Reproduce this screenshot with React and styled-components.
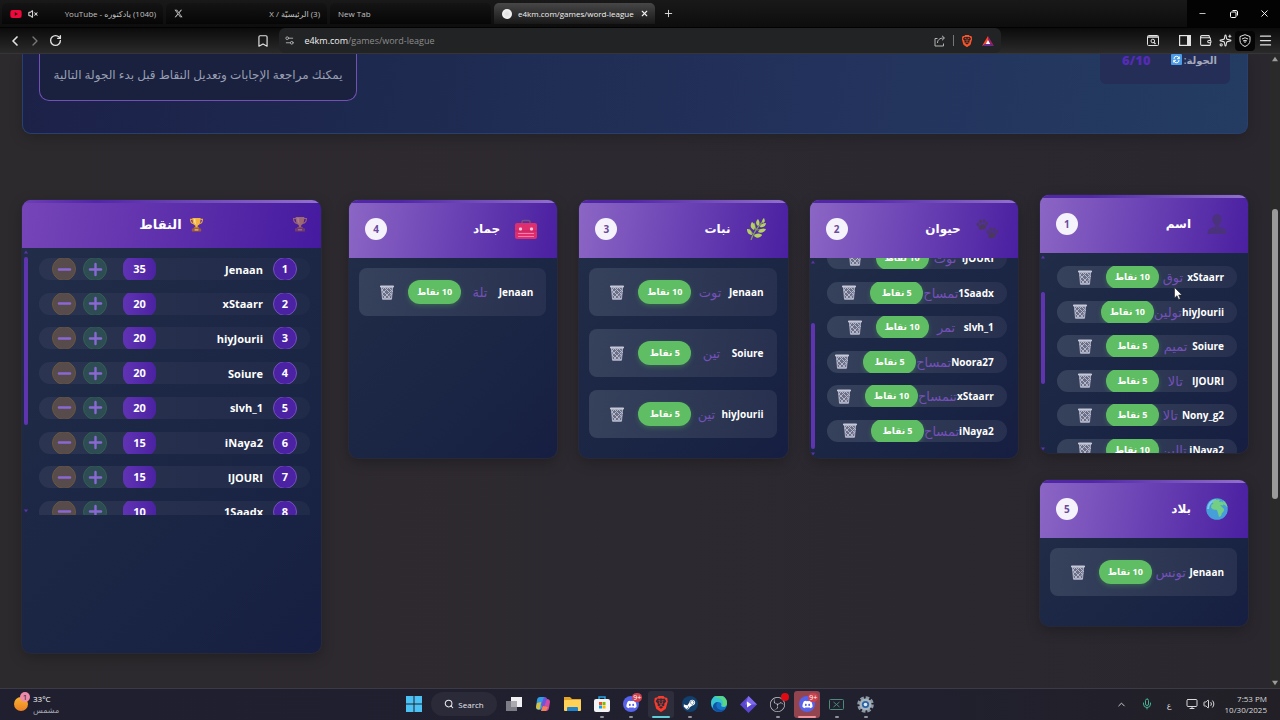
import React from "react";
import styled, { createGlobalStyle } from "styled-components";
import {
  Bookmark,
  ChevronLeft,
  ChevronRight,
  ChevronUp,
  Menu,
  Mic,
  Minus,
  Monitor,
  Plus,
  RotateCw,
  Search,
  Settings2,
  Sparkles,
  Volume2,
  VolumeX,
  Wallet,
  X,
} from "lucide-react";
import { FaDiscord, FaSteamSymbol, FaXTwitter, FaYoutube } from "react-icons/fa6";
import { SiBrave, SiObsstudio } from "react-icons/si";

const categories = [
  {
    id: 1,
    title: "اسم",
    icon: "person",
    lifted: true,
    scroll: [34, 93, 64],
    rows: [
      ["xStaarr", "توق", 10],
      ["hiyJourii", "تولين", 10],
      ["Soiure", "تميم", 5],
      ["IJOURI", "تالا", 5],
      ["Nony_g2", "تالا", 5],
      ["iNaya2", "تالين", 10],
    ],
  },
  {
    id: 2,
    title: "حيوان",
    icon: "paws",
    atEnd: true,
    scroll: [60, 127, 3],
    rows: [
      ["IJOURI", "توت", 10],
      ["1Saadx", "تمساح", 5],
      ["slvh_1", "تمر", 10],
      ["Noora27", "تمساح", 5],
      ["xStaarr", "تنمساح", 10],
      ["iNaya2", "تمساح", 5],
    ],
  },
  {
    id: 3,
    title: "نبات",
    icon: "herb",
    rows: [
      ["Jenaan", "توت", 10],
      ["Soiure", "تين", 5],
      ["hiyJourii", "تين", 5],
    ],
  },
  { id: 4, title: "جماد", icon: "toolbox", rows: [["Jenaan", "تلة", 10]] },
  { id: 5, title: "بلاد", icon: "globe", rows: [["Jenaan", "تونس", 10]] },
];

const players = [
  ["Jenaan", 35],
  ["xStaarr", 20],
  ["hiyJourii", 20],
  ["Soiure", 20],
  ["slvh_1", 20],
  ["iNaya2", 15],
  ["IJOURI", 15],
  ["1Saadx", 10],
];

const Trophy = ({ size = 16 }) => (
  <svg width={size} height={size} viewBox="0 0 16 16" aria-hidden="true">
    <path d="M4 2.500H1.600c0 3 1.200 4.600 3.600 4.800M12 2.500h2.400c0 3-1.200 4.600-3.600 4.800" fill="none" stroke="#e8a33d" strokeWidth="1.200" />
    <path d="M3.600 1h8.800c0 4.600-1 7.200-3.200 8.200v2.300H6.800V9.200C4.600 8.200 3.600 5.600 3.600 1z" fill="#f2b544" />
    <path d="M5.200 2h1.600c0 2.600.3 4.400 1 6-1.800-.8-2.600-3-2.600-6z" fill="#ffe09a" />
    <path d="M5.500 11h5l.7 1.500H4.800z" fill="#c9782c" />
    <rect x="3" y="12.300" width="10" height="3.200" rx=".5" fill="#9b5b3a" />
    <rect x="6" y="13" width="4" height="1.500" fill="#e9b565" />
  </svg>
);

const Trash = () => (
  <svg width="14" height="15" viewBox="0 0 14 15" aria-hidden="true">
    <path d="M1.500 2l1 12.200h9L12.500 2z" fill="#6b6f88" stroke="#b4b7ca" />
    <path d="M2 5l9 9M2 9l5 5M4 2l8 8M8 2l5 5M12 5l-9 9M12 8.500L7 14M9 2L2 9M5 2L1.500 5.500M2.500 13.700h9" stroke="#b4b7ca" />
    <rect x="0" y=".5" width="14" height="2" rx=".8" fill="#c5c8d8" />
  </svg>
);

const CategoryIcon = ({ name }) => (
  <svg width="22" height="22" viewBox="0 0 22 22" aria-hidden="true">
    {name === "person" && (
      <g fill="#4b327d">
        <ellipse cx="11" cy="6.500" rx="4.600" ry="5.500" />
        <path d="M9 10h4v4c3 .8 6 1.500 7 3.500l.5 3.500h-19l.5-3.500c1-2 4-2.700 7-3.500z" />
      </g>
    )}
    {name === "paws" && (
      <g fill="#4a3a59">
        <path d="M3 9c1-2 3-3.500 5-2.500s2.600 2.500 1.500 4-2.500.4-3.800 1S2 11 3 9z" />
        <ellipse cx="2" cy="6.500" rx="1.200" ry="1.900" transform="rotate(-20 2 6.500)" />
        <ellipse cx="4.500" cy="3.500" rx="1.200" ry="2" />
        <ellipse cx="8" cy="3" rx="1.200" ry="2" />
        <ellipse cx="10.500" cy="5.500" rx="1.100" ry="1.800" transform="rotate(25 10.500 5.500)" />
        <path d="M12.500 18c.5-2.500 2-4 4-3.500s3.500 1.500 3 3.500-2 1.300-3.200 2-4.300.5-3.800-2z" />
        <ellipse cx="12" cy="14" rx="1.200" ry="1.900" transform="rotate(-20 12 14)" />
        <ellipse cx="14.500" cy="11.500" rx="1.200" ry="1.900" />
        <ellipse cx="18" cy="11.500" rx="1.200" ry="1.900" />
        <ellipse cx="20.500" cy="14" rx="1.100" ry="1.800" transform="rotate(25 20.500 14)" />
      </g>
    )}
    {name === "herb" && (
      <g fill="#b5cf62">
        <path d="M5 22C7 15 11 10 17 3M7 16L3 11M10 12L8 5M8 17l8 0M11 12l7-1" fill="none" stroke="#7f9d58" strokeWidth="1.200" />
        <path d="M17 5c-2-2 0-4 1-5 1 2 1.500 4-1 5zM12 8C9 6 10 3 12 1c2 3 2 5 0 7z" />
        <path d="M8 12C4 10 4 7 6 4c3 2 4 5 2 8zM6 17c-4-.5-5-3-5-6 3 0 5 2.500 5 6z" />
        <path d="M14 9c0-3 3-4 6-4 0 3-3 5-6 4zM12 14c1-3 4-4 8-3-1 3-5 5-8 3zM8 18c2-3 5-3 8-1-2 3-5 4-8 1z" />
      </g>
    )}
    {name === "toolbox" && (
      <g>
        <path d="M7 6V4q0-1.500 1.500-1.500h5Q15 2.500 15 4v2" fill="none" stroke="#76527f" strokeWidth="1.500" />
        <rect x="0" y="5" width="22" height="16" rx="2" fill="#dd2e6e" />
        <path d="M0 13h22" stroke="#c92262" />
        <rect x="4" y="9.500" width="3" height="3" rx="1" fill="#ffc7dc" />
        <rect x="15" y="9.500" width="3" height="3" rx="1" fill="#ffc7dc" />
        <path d="M3 15.500h16M3 18.500h16" stroke="#ff7aa8" strokeWidth="1.200" />
      </g>
    )}
    {name === "globe" && (
      <g>
        <circle cx="11" cy="11" r="10.800" fill="#469fd9" />
        <path d="M2 11a9 9 0 0 1 8-9" stroke="#7cc6ef" strokeWidth="2" fill="none" />
        <path d="M6 4c2-2 5-3 8-2l-1 2 3-.5 2 2-1 2-3-.5 2 2 2 2c0 3-1 3-2 4l-1 3-2 1-1-4-1-3-4-.5-2-2 .5-3 2-.5z" fill="#72cf83" />
        <path d="M17 2.500c3 2 4 4 4.500 7l-2-2-2-1z" fill="#72cf83" />
      </g>
    )}
  </svg>
);

const ScrollThumb = ({ parts: [before, size, after] }) => (
  <ListScroll aria-hidden="true">
    <Arrow viewBox="0 0 4 3"><path d="M0 3l2-3 2 3z" fill="currentColor" /></Arrow>
    <Space $grow={before} />
    <Thumb $grow={size} />
    <Space $grow={after} />
    <Arrow viewBox="0 0 4 3"><path d="M0 0l2 3 2-3z" fill="currentColor" /></Arrow>
  </ListScroll>
);

const Category = ({ data }) => {
  const { title, icon, id, rows, scroll, atEnd, lifted } = data;
  return (
    <Card $lifted={lifted} $tall={id < 5}>
      <CardHeader>
        <CategoryIcon name={icon} />
        <h2>{title}</h2>
        <Badge>{id}</Badge>
      </CardHeader>
      <ListArea>
        <Answers $compact={!!scroll} $atEnd={atEnd}>
          {rows.map(([name, answer, points]) => (
            <Answer key={name} $compact={!!scroll}>
              <strong>{name}</strong>
              <Word>{answer}</Word>
              <Points>{points} نقاط</Points>
              <TrashButton type="button" aria-label={`حذف ${name}`}>
                <Trash />
              </TrashButton>
            </Answer>
          ))}
        </Answers>
        {scroll && <ScrollThumb parts={scroll} />}
      </ListArea>
    </Card>
  );
};

const ScoreBoard = () => (
  <Scores>
    <ScoreHeader>
      <FadedTrophy><Trophy /></FadedTrophy>
      <h2><Trophy size={15} /> النقاط</h2>
    </ScoreHeader>
    <ScoreArea>
      <Ranking>
        {players.map(([name, score], i) => (
          <Player key={name}>
            <Rank>{i + 1}</Rank>
            <strong>{name}</strong>
            <Score>{score}</Score>
            <RoundButton $plus type="button" aria-label={`زيادة ${name}`}><Plus size={19} strokeWidth={3} /></RoundButton>
            <RoundButton type="button" aria-label={`إنقاص ${name}`}><Minus size={19} strokeWidth={3} /></RoundButton>
          </Player>
        ))}
      </Ranking>
      <ScrollThumb parts={[3, 169, 84]} />
    </ScoreArea>
  </Scores>
);

const BrowserTop = () => (
  <>
    <TabBar>
      <Tab>
        <FaYoutube color="#f0083c" size={12} />
        <VolumeX size={10} strokeWidth={2.5} color="#e0e0e0" />
        <TabTitle dir="rtl">(1040) يادكتوره - YouTube</TabTitle>
      </Tab>
      <Tab>
        <FaXTwitter color="#c9c9c9" size={9} />
        <TabTitle dir="rtl">(3) الرئيسيّة / X</TabTitle>
      </Tab>
      <Tab><span>New Tab</span></Tab>
      <Tab $active>
        <Favicon />
        <span>e4km.com/games/word-league</span>
        <CloseTab type="button" aria-label="Close tab"><X size={9} strokeWidth={3} /></CloseTab>
      </Tab>
      <BarButton type="button" aria-label="New tab"><Plus size={11} /></BarButton>
      <WindowButtons>
        <button type="button" aria-label="Minimize"><Minus size={9} /></button>
        <button type="button" aria-label="Restore">
          <svg width="8" height="8" viewBox="0 0 8 8" fill="none" stroke="currentColor">
            <rect x=".5" y="2" width="5.500" height="5.500" rx="1" />
            <path d="M2.500.5H6Q7.500.5 7.500 2v3.500" />
          </svg>
        </button>
        <button type="button" aria-label="Close"><X size={11} /></button>
      </WindowButtons>
    </TabBar>
    <Toolbar>
      <Nav>
        <BarButton type="button" aria-label="Back"><ChevronLeft size={16} strokeWidth={2.5} /></BarButton>
        <BarButton $dim type="button" aria-label="Forward"><ChevronRight size={16} /></BarButton>
        <BarButton type="button" aria-label="Reload"><RotateCw size={13} strokeWidth={2.5} /></BarButton>
      </Nav>
      <BarButton type="button" aria-label="Bookmark"><Bookmark size={14} /></BarButton>
      <Address>
        <Settings2 size={11} />
        <p><b>e4km.com</b>/games/word-league</p>
        <svg width="12" height="12" viewBox="0 0 12 12" fill="none" stroke="currentColor" aria-hidden="true">
          <path d="M3.500 3.500H1v7.500h8.500V8.500M3.500 8c0-3 2-5 6.500-5M8 .8L10.500 3 8 5.300" />
        </svg>
        <i />
        <SiBrave size={12} color="#fb542b" />
        <svg width="12" height="10" viewBox="0 0 12 10" aria-hidden="true">
          <path d="M6 0L0 10l6-3.500z" fill="#ff4724" />
          <path d="M6 0l6 10-6-3.500z" fill="#9e1f63" />
          <path d="M0 10h12L6 6.500z" fill="#662d91" />
          <path d="M6 4l2.200 4H3.800z" fill="#fff" />
        </svg>
      </Address>
      <Tools>
        <BarButton type="button" aria-label="Find">
          <svg width="12" height="11" viewBox="0 0 12 11" fill="none" stroke="currentColor">
            <rect x=".5" y=".5" width="11" height="10" rx="1" />
            <path d="M1 2h10M7 7.500l1.500 1.500" strokeWidth="1.400" />
            <circle cx="5.800" cy="6" r="1.800" />
          </svg>
        </BarButton>
        <BarButton $spaced type="button" aria-label="Side panel">
          <svg width="12" height="11" viewBox="0 0 12 11">
            <rect x=".6" y=".6" width="10.800" height="9.800" fill="none" stroke="currentColor" strokeWidth="1.200" />
            <path d="M8 0h4v11H8z" fill="currentColor" />
          </svg>
        </BarButton>
        <BarButton type="button" aria-label="Wallet"><Wallet size={13} /></BarButton>
        <BarButton type="button" aria-label="Leo"><Sparkles size={13} /></BarButton>
        <BarButton $dark type="button" aria-label="VPN">
          <svg width="12" height="13" viewBox="0 0 12 13" fill="none" stroke="currentColor">
            <path d="M6 .7l5 1.800v4c0 3-2 4.700-5 6-3-1.300-5-3-5-6v-4z" />
            <path d="M3 5q3-2.500 6 0M4 7q2-1.500 4 0M6 7v2" />
          </svg>
        </BarButton>
        <BarButton type="button" aria-label="Menu"><Menu size={15} /></BarButton>
      </Tools>
    </Toolbar>
  </>
);

const DiscordIcon = () => (
  <>
    <Disc $color="#5662ea"><FaDiscord size={11} color="#fff" /></Disc>
    <Notice>9+</Notice>
  </>
);

const Steam = () => (
  <Disc $color="#123f6b"><FaSteamSymbol size={13} color="#fff" /></Disc>
);

const Obs = () => (
  <>
    <SiObsstudio size={15} color="#c8c8cc" />
    <Notice $dot />
  </>
);

const apps = [
  {
    name: "Task view",
    icon: (
      <svg width="16" height="16" viewBox="0 0 16 16">
        <rect x="5" y="1" width="11" height="10" fill="#f1f1f3" />
        <rect x="0" y="5" width="11" height="10" fill="#7c7c86" />
        <path d="M5 5h6v6H5z" fill="#aaaab0" />
      </svg>
    ),
  },
  {
    name: "Copilot",
    icon: (
      <svg width="16" height="16" viewBox="0 0 16 16">
        <path d="M5 1h5L7 12q-.5 2-3 2-3 0-3-3l1-7q.5-3 3-3z" fill="#2f9ce8" />
        <path d="M2 7l4-1-1 7q-4 1-4-2z" fill="#d9c13e" />
        <path d="M11 15H6l3-10q.5-2 3-2 3 0 3 3l-1 6q-.5 3-3 3z" fill="#d04ba5" />
        <path d="M9 1q3 0 3 2L9 11 6 9z" fill="#6e54d8" />
        <path d="M6 15l2-5 5 1-2 4z" fill="#f28155" />
      </svg>
    ),
  },
  {
    name: "Explorer",
    icon: (
      <svg width="17" height="16" viewBox="0 0 17 16">
        <path d="M0 1h6l2 2h9v4H0z" fill="#e2a527" />
        <rect y="4" width="17" height="11" rx="1" fill="#ffd257" />
        <path d="M3 15v-3q0-1 1-1h9q1 0 1 1v3z" fill="#1e83cc" />
      </svg>
    ),
  },
  {
    name: "Store",
    running: true,
    icon: (
      <svg width="16" height="16" viewBox="0 0 16 16">
        <path d="M5 4V1h6v3" fill="none" stroke="#29a4e6" strokeWidth="1.500" />
        <rect y="3" width="16" height="13" rx="2" fill="#f4f4f6" />
        <path d="M5 6h3v3H5z" fill="#f25022" />
        <path d="M8.500 6h3v3h-3z" fill="#7fba00" />
        <path d="M5 9.500h3v3H5z" fill="#00a4ef" />
        <path d="M8.500 9.500h3v3h-3z" fill="#ffb900" />
      </svg>
    ),
  },
  { name: "Discord", running: true, icon: <DiscordIcon /> },
  { name: "Brave", active: "#60cdd8", bg: "#2d2d3c", icon: <SiBrave size={16} color="#fb3a2b" /> },
  { name: "Steam", running: true, icon: <Steam /> },
  {
    name: "Edge",
    icon: (
      <svg width="16" height="16" viewBox="0 0 16 16">
        <circle cx="8" cy="8" r="8" fill="#1674c8" />
        <path d="M0 7a8 8 0 0 1 16 0c.5 4-4 5-6 3 1-2 0-4-3-4S2 8 2 12Q0 10 0 7z" fill="#37c6d0" />
        <path d="M8 0c5 0 8 3 8 7 0 3-3 4-5 3 3-5-1-9-7-8Q6 0 8 0z" fill="#5bd77d" />
        <path d="M7 6C4 8 5 13 10 14q2 0 4-1-3 4-8 2.500Q0 12 3 8q2-2 4-2z" fill="#1250a0" />
      </svg>
    ),
  },
  {
    name: "Clip",
    icon: (
      <svg width="17" height="17" viewBox="0 0 17 17">
        <path d="M8.500 0l8.500 8.500-8.500 8.500L0 8.500z" fill="#5947cf" />
        <path d="M8.500 0L17 8.500H5z" fill="#7f6bec" />
        <path d="M7 5.500l4.500 3L7 11.500z" fill="#fff" />
      </svg>
    ),
  },
  { name: "OBS", running: true, icon: <Obs /> },
  { name: "Discord call", active: "#f0929b", bg: "#92454f", icon: <DiscordIcon /> },
  {
    name: "Xbox",
    running: true,
    icon: (
      <svg width="15" height="11" viewBox="0 0 15 11" fill="none" stroke="#4d8a78">
        <rect x=".5" y=".5" width="14" height="10" rx="1" />
        <path d="M4.500 3l6 5M10.500 3l-6 5" />
      </svg>
    ),
  },
  {
    name: "Settings",
    running: true,
    icon: (
      <svg width="17" height="17" viewBox="0 0 17 17">
        <circle cx="8.500" cy="8.500" r="6.800" fill="none" stroke="#8c98a3" strokeWidth="3" strokeDasharray="3.500 1.840" />
        <circle cx="8.500" cy="8.500" r="6" fill="#a8b3bd" />
        <circle cx="8.500" cy="8.500" r="3.600" fill="#2b65a8" />
        <circle cx="8.500" cy="8.500" r="1.800" fill="#dfe9f4" />
      </svg>
    ),
  },
];

const TaskBar = () => (
  <Tasks>
    <Weather>
      <Sun><span>1</span></Sun>
      <p>33°C<br /><span>مشمس</span></p>
    </Weather>
    <Center>
      <AppButton type="button" aria-label="Start">
        <svg width="16" height="16" viewBox="0 0 16 16">
          <path d="M0 0h7.500v7.500H0zM8.500 0H16v7.500H8.500zM0 8.500h7.500V16H0zM8.500 8.500H16V16H8.500z" fill="#4cc2f4" />
        </svg>
      </AppButton>
      <SearchButton type="button"><Search size={10} strokeWidth={2.5} /> Search</SearchButton>
      <Apps>
        {apps.map((app) => (
          <AppButton key={app.name} type="button" aria-label={app.name} $bg={app.bg} $running={app.running} $active={app.active}>
            {app.icon}
          </AppButton>
        ))}
      </Apps>
    </Center>
    <Tray>
      <ChevronUp size={11} />
      <Mic size={12} color="#41b294" />
      <span>ع</span>
      <TrayPair><Monitor size={12} /><Volume2 size={12} /></TrayPair>
      <p>7:53 PM<br />10/30/2025</p>
    </Tray>
  </Tasks>
);

export default function App() {
  return (
    <Screen>
      <GlobalStyle />
      <BrowserTop />
      <Viewport>
        <Page dir="rtl">
          <Hero>
            <Round>
              <span>الجولة:</span>
              <svg width="11" height="11" viewBox="0 0 11 11" aria-hidden="true">
                <rect width="11" height="11" rx="1" fill="#4a9be8" />
                <path d="M3 5a2.500 2.500 0 0 1 5-.5M8 6a2.500 2.500 0 0 1-5 .5M8.300 2.500v2.200H6M2.700 8.500V6.300H5" fill="none" stroke="#fff" />
              </svg>
              <b>6/10</b>
            </Round>
            <Info>يمكنك مراجعة الإجابات وتعديل النقاط قبل بدء الجولة التالية</Info>
          </Hero>
          <Board>
            <Cards>
              {categories.map((c) => <Category key={c.id} data={c} />)}
            </Cards>
            <ScoreBoard />
          </Board>
        </Page>
        <PageScroll aria-hidden="true">
          <Arrow $page viewBox="0 0 4 3"><path d="M0 3l2-3 2 3z" fill="currentColor" /></Arrow>
          <Space $grow={146} />
          <Thumb $page $grow={287} />
          <Space $grow={180} />
          <Arrow $page viewBox="0 0 4 3"><path d="M0 0l2 3 2-3z" fill="currentColor" /></Arrow>
        </PageScroll>
      </Viewport>
      <TaskBar />
      <Pointer width="9" height="13" viewBox="0 0 9 13" aria-hidden="true">
        <path d="M.5.5v10.500L3 8.700 4.600 12.500l1.700-.8L4.700 8H8z" fill="#fff" stroke="#222" strokeWidth=".6" />
      </Pointer>
    </Screen>
  );
}

const GlobalStyle = createGlobalStyle`
  * {
    box-sizing: border-box;
  }
  body {
    margin: 0;
    background: #2c292f;
    color: #fff;
    font-family: "Open Sans", "DejaVu Sans", sans-serif;
    font-size: 10px;
  }
  h2, p, ul, ol {
    margin: 0;
    padding: 0;
    list-style: none;
  }
  button {
    border: 0;
    padding: 0;
    background: none;
    color: inherit;
    font: inherit;
  }
  svg {
    display: block;
    flex-shrink: 0;
  }
`;

const Screen = styled.div`
  height: 100vh;
  display: flex;
  flex-direction: column;
  overflow: hidden;
`;

const TabBar = styled.div`
  height: 28px;
  flex-shrink: 0;
  display: flex;
  align-items: center;
  gap: 3px;
  padding-left: 2px;
  background: linear-gradient(#191919, #0d0d0d);
  border-bottom: 1px solid #020202;
`;

const Tab = styled.div`
  width: 161px;
  height: 21px;
  display: flex;
  align-items: center;
  gap: 6px;
  padding: 0 7px 0 8px;
  font-size: 8px;
  white-space: nowrap;
  border-radius: 5px 5px 0 0;
  color: ${({ $active }) => ($active ? "#f2f2f2" : "#c0c0c0")};
  background: ${({ $active }) =>
    $active ? "linear-gradient(#474747, #181818)" : "linear-gradient(#141414, #060606)"};
`;

const TabTitle = styled.span`
  flex: 1;
`;

const Favicon = styled.i`
  width: 10px;
  height: 10px;
  flex-shrink: 0;
  border-radius: 50%;
  background: radial-gradient(#ddd, #fff);
`;

const CloseTab = styled.button`
  margin-left: auto;
`;

const BarButton = styled.button`
  width: 20px;
  height: 20px;
  flex-shrink: 0;
  display: grid;
  place-items: center;
  border-radius: 4px;
  color: ${({ $dim }) => ($dim ? "#777" : "#e2e2e2")};
  background: ${({ $dark }) => ($dark ? "#050505" : "transparent")};
  margin-left: ${({ $spaced }) => ($spaced ? "12px" : "0")};
`;

const WindowButtons = styled.div`
  display: flex;
  height: 100%;
  margin-left: auto;
  background: #030303;
  button {
    width: 31px;
    display: grid;
    place-items: center;
  }
`;

const Toolbar = styled.div`
  height: 26px;
  flex-shrink: 0;
  display: flex;
  align-items: center;
  padding: 0 5px;
  background: linear-gradient(#0b0b0b, #2a2a2b);
  border-bottom: 1px solid #353538;
`;

const Nav = styled.div`
  flex: 251 0 0;
  display: flex;
`;

const Address = styled.div`
  flex: 717 0 0;
  height: 100%;
  display: flex;
  align-items: center;
  gap: 9px;
  margin-left: 6px;
  padding: 0 7px 0 5px;
  border-radius: 6px;
  background: #222325;
  color: #b4b4b4;
  font-size: 9px;
  p {
    flex: 1;
    color: #8c8c8c;
  }
  b {
    font-weight: 500;
    color: #f0f0f0;
  }
  i {
    height: 11px;
    border-left: 1px solid #777;
    margin: 0 -2px;
  }
`;

const Tools = styled.div`
  flex: 277 0 0;
  display: flex;
  justify-content: flex-end;
`;

const Viewport = styled.main`
  flex: 1;
  min-height: 0;
  display: flex;
`;

const Page = styled.div`
  flex: 1;
  min-width: 0;
  padding: 0 22px;
  overflow: hidden;
  background: linear-gradient(90deg, #2d2a2e, #2d2930 50%, #2a272e);
`;

const PageScroll = styled.div`
  width: 10px;
  display: flex;
  flex-direction: column;
  align-items: center;
  padding: 2px 0;
  background: #2a2a2b;
  color: #9c9c9c;
`;

const Hero = styled.header`
  height: 80px;
  display: flex;
  justify-content: space-between;
  align-items: flex-start;
  padding: 0 17px 0 16px;
  border: solid #28406e;
  border-width: 0 1px 1px;
  border-radius: 0 0 9px 9px;
  background: linear-gradient(100deg, #1c2148, #1e2a50 32%, #23325c 65%, #243c62);
  box-shadow: 0 4px 14px #0003;
`;

const Round = styled.div`
  width: 130px;
  height: 30px;
  display: flex;
  gap: 2px;
  padding: 0 13px;
  font-weight: 600;
  line-height: 13px;
  color: #a4a9ba;
  border-radius: 0 0 6px 6px;
  background: #242e57;
  b {
    margin-inline-start: auto;
    margin-inline-end: 9px;
    font-size: 13px;
    color: #552bb5;
  }
`;

const Info = styled.p`
  width: 318px;
  height: 47px;
  padding-top: 12px;
  text-align: center;
  white-space: nowrap;
  font-size: 12px;
  line-height: 18px;
  color: #989eb0;
  border: solid #7350b5;
  border-width: 0 1px 1px;
  border-radius: 0 0 10px 10px;
  background: #1a213f;
`;

const Board = styled.div`
  display: grid;
  grid-template-columns: minmax(0, 1fr) 299px;
  align-items: start;
  gap: 28px;
  margin-top: 66px;
`;

const Cards = styled.div`
  display: grid;
  grid-template-columns: repeat(4, minmax(0, 1fr));
  align-items: start;
  gap: 22px;
`;

const Card = styled.section`
  height: ${({ $tall }) => ($tall ? "258px" : "146px")};
  display: flex;
  flex-direction: column;
  overflow: hidden;
  border-radius: 9px;
  background: linear-gradient(135deg, #222e49, #161f41);
  box-shadow: 0 0 0 1px #29304a80, 0 4px 14px #0004;
  transform: ${({ $lifted }) => ($lifted ? "translateY(-5px)" : "none")};
`;

const CardHeader = styled.header`
  height: 58px;
  flex-shrink: 0;
  display: flex;
  align-items: center;
  gap: 15px;
  padding: 0 20px 0 16px;
  background:
    linear-gradient(90deg, #5127a6, #5127a6 25%, #9371cc) top / 100% 3px no-repeat,
    linear-gradient(100deg, #8c66c5, #6b42b4 50%, #4a1fa1);
  h2 {
    font-size: 12px;
    line-height: 20px;
  }
`;

const Badge = styled.span`
  width: 22px;
  height: 22px;
  margin-inline-start: auto;
  display: grid;
  place-items: center;
  border-radius: 50%;
  background: #f5f2fb;
  color: #6a4a9e;
  font-weight: 700;
`;

const ListArea = styled.div`
  flex: 1;
  min-height: 0;
  display: flex;
  overflow: hidden;
`;

const ScoreArea = styled(ListArea)`
  flex: 0 0 267px;
`;

const Answers = styled.ul`
  flex: 1;
  min-width: 0;
  height: ${({ $compact }) => ($compact ? "211px" : "auto")};
  align-self: ${({ $atEnd }) => ($atEnd ? "flex-end" : "flex-start")};
  display: flex;
  flex-direction: column;
  justify-content: space-between;
  gap: ${({ $compact }) => ($compact ? "0" : "13px")};
  padding: ${({ $compact, $atEnd }) => {
    if (!$compact) return "10px 11px 0 10px";
    return $atEnd ? "0 11px 16px 10px" : "13px 11px 3px 10px";
  }};
`;

const Answer = styled.li`
  height: ${({ $compact }) => ($compact ? "22px" : "48px")};
  flex-shrink: 0;
  display: flex;
  align-items: center;
  padding: 0 13px;
  border-radius: ${({ $compact }) => ($compact ? "11px" : "8px")};
  background: linear-gradient(100deg, #36415c, #27314f);
  overflow: ${({ $compact }) => ($compact ? "hidden" : "visible")};
  white-space: nowrap;
`;

const Word = styled.span`
  flex: 1 0 auto;
  text-align: center;
  font-size: 13px;
  line-height: 22px;
  color: #7450b8;
`;

const Points = styled.span`
  width: 53px;
  height: 24px;
  flex-shrink: 0;
  text-align: center;
  font-size: 9px;
  font-weight: 700;
  line-height: 24px;
  border-radius: 12px;
  background: #5fbe63;
  box-shadow: 0 2px 5px #4caf5055;
`;

const TrashButton = styled.button`
  flex-shrink: 0;
  padding: 0 14px 0 8px;
`;

const ListScroll = styled.div`
  width: 7px;
  flex-shrink: 0;
  display: flex;
  flex-direction: column;
  align-items: center;
  padding: 2px 0;
  color: #5c34a8;
`;

const Arrow = styled.svg`
  width: ${({ $page }) => ($page ? "6px" : "4px")};
  height: ${({ $page }) => ($page ? "6px" : "4px")};
`;

const Space = styled.i`
  flex: ${({ $grow }) => $grow} 0 0;
`;

const Thumb = styled.i`
  flex: ${({ $grow }) => $grow} 0 0;
  width: ${({ $page }) => ($page ? "6px" : "4px")};
  border-radius: 3px;
  background: ${({ $page }) => ($page ? "#9a9a9a" : "#6034af")};
`;

const Scores = styled(Card)`
  height: 453px;
`;

const ScoreHeader = styled(CardHeader)`
  height: 48px;
  display: grid;
  grid-template-columns: 1fr auto 1fr;
  padding: 0 13px;
  background:
    linear-gradient(90deg, #6c3fb6, #5127a6 25%, #9371cc) top / 100% 3px no-repeat,
    linear-gradient(100deg, #7645b8, #451a9f);
  h2 {
    display: flex;
    align-items: center;
    gap: 7px;
    font-size: 13px;
  }
`;

const FadedTrophy = styled.span`
  opacity: 0.5;
`;

const Ranking = styled.ol`
  flex: 1;
  height: 275px;
  display: flex;
  flex-direction: column;
  justify-content: space-between;
  padding: 10px 11px 0 10px;
`;

const Player = styled.li`
  height: 22px;
  flex-shrink: 0;
  display: flex;
  align-items: center;
  overflow: hidden;
  padding: 0 13px;
  border-radius: 11px;
  background: linear-gradient(90deg, #2b3551, #202a49);
  font-size: 11px;
  strong {
    flex: 1;
    margin: 0 10px;
  }
`;

const Rank = styled.span`
  width: 24px;
  height: 24px;
  flex-shrink: 0;
  text-align: center;
  font-weight: 700;
  line-height: 22px;
  border: 1px solid #7551bb;
  border-radius: 50%;
  background: #4c22a4;
`;

const Score = styled.span`
  width: 33px;
  height: 24px;
  margin-inline-end: 16px;
  text-align: center;
  font-weight: 700;
  line-height: 24px;
  border-radius: 9px;
  background: linear-gradient(90deg, #6033b4, #4b22a2);
`;

const RoundButton = styled.button`
  width: 24px;
  height: 24px;
  flex-shrink: 0;
  display: grid;
  place-items: center;
  border: 1px solid ${({ $plus }) => ($plus ? "#326150" : "#6b573e")};
  border-radius: 50%;
  background: ${({ $plus }) => ($plus ? "#2e4c53" : "#574b4b")};
  color: #8a68d4;
  & + & {
    margin-inline-start: 7px;
  }
`;

const Pointer = styled.svg`
  position: absolute;
  left: 1174px;
  top: 287px;
`;

const Tasks = styled.footer`
  height: 32px;
  flex-shrink: 0;
  display: grid;
  grid-template-columns: 1fr auto 1fr;
  align-items: center;
  padding-bottom: 1px;
  border-top: 1px solid #3c3a45;
  background: linear-gradient(90deg, #1f1f2f, #20202f 70%, #222026);
  font-size: 8px;
  line-height: 11px;
`;

const Weather = styled.div`
  display: flex;
  align-items: center;
  gap: 5px;
  padding-left: 14px;
  p span {
    color: #a5a5b0;
  }
`;

const Sun = styled.i`
  position: relative;
  width: 14px;
  height: 14px;
  border-radius: 50%;
  background: linear-gradient(#f7b531, #ec7f25);
  span {
    position: absolute;
    left: 6px;
    top: -5px;
    width: 10px;
    height: 10px;
    border-radius: 50%;
    background: #ee8bab;
    color: #222;
    font-style: normal;
    line-height: 10px;
    text-align: center;
  }
`;

const Center = styled.div`
  display: flex;
  align-items: center;
`;

const Apps = styled.div`
  width: 378px;
  margin-left: 4px;
  display: flex;
  justify-content: space-between;
`;

const AppButton = styled.button`
  position: relative;
  width: 26px;
  height: 27px;
  display: grid;
  place-items: center;
  border-radius: 3px;
  background: ${({ $bg }) => $bg || "transparent"};
  &::after {
    content: "";
    position: absolute;
    bottom: 0;
    left: ${({ $active }) => ($active ? "4px" : "11px")};
    right: ${({ $active }) => ($active ? "4px" : "11px")};
    height: 2px;
    border-radius: 1px;
    background: ${({ $active, $running }) => $active || ($running ? "#92929c" : "transparent")};
  }
`;

const SearchButton = styled.button`
  width: 66px;
  height: 24px;
  margin-left: 4px;
  display: flex;
  align-items: center;
  justify-content: center;
  gap: 4px;
  border-radius: 12px;
  background: #2a2a38;
  color: #e8e8ec;
  font-size: 8px;
`;

const Disc = styled.span`
  width: 16px;
  height: 16px;
  display: grid;
  place-items: center;
  border-radius: 50%;
  background: ${({ $color }) => $color};
`;

const Notice = styled.span`
  position: absolute;
  right: 2px;
  top: 2px;
  width: ${({ $dot }) => ($dot ? "8px" : "10px")};
  height: ${({ $dot }) => ($dot ? "8px" : "9px")};
  border-radius: 5px;
  background: ${({ $dot }) => ($dot ? "#e00b12" : "#cf4150")};
  font-size: 7px;
  line-height: 9px;
`;

const Tray = styled.div`
  display: flex;
  align-items: center;
  justify-content: flex-end;
  gap: 14px;
  padding-right: 13px;
  color: #dadada;
  p {
    text-align: right;
    margin-left: -4px;
  }
`;

const TrayPair = styled.span`
  display: flex;
  gap: 5px;
`;
